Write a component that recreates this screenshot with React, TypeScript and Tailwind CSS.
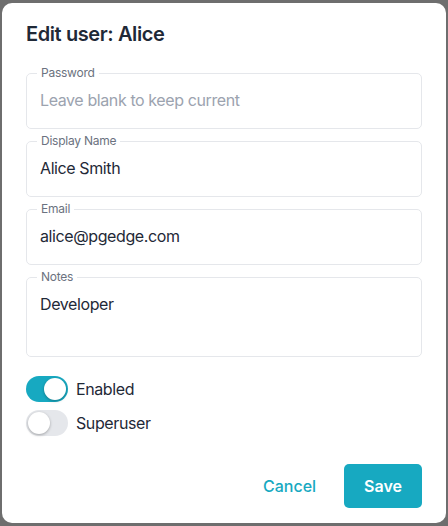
import { ReactNode, useState } from 'react'
import clsx from 'clsx'

function Field({ label, children }: { label: string, children: ReactNode }) {
  return (
    <fieldset className="border border-[#e5e7eb] rounded-[5px] px-[13px] pb-4 min-w-0">
      <legend className="ml-[-3px] px-[4px] text-xs leading-none tracking-[-0.02em] text-[#6b7280]">
        {label}
      </legend>
      <div className="mt-[9px]">
        {children}
      </div>
    </fieldset>
  )
}

function Toggle({ on, label, onChange }: { on: boolean, label: string, onChange: (v: boolean) => void }) {
  return (
    <label className="flex items-center gap-2 cursor-pointer select-none">
      <button
        type="button"
        onClick={() => onChange(!on)}
        className={clsx('w-[42px] h-[26px] rounded-full p-[2px] flex transition-colors', {
          ['bg-[#17a9c1] justify-end']: on,
          ['bg-[#e5e7eb] justify-start']: !on,
        })}
      >
        <span className="block w-[22px] h-[22px] rounded-full bg-white shadow-[0_1px_3px_rgba(0,0,0,0.3)]" />
      </button>
      <span className="text-base leading-6 text-[#1f2937]">{label}</span>
    </label>
  )
}

export default function App() {
  const [enabled, setEnabled] = useState(true)
  const [superuser, setSuperuser] = useState(false)

  return (
    <div
      className="w-[448px] h-[526px] bg-[#6e6e6e] pl-[2px] pt-[3px] tracking-[-0.025em]"
      style={{ fontFamily: 'Inter, "Noto Sans", sans-serif' }}
    >
      <div className="w-[444px] h-[520px] bg-white rounded-[10px] px-6 flex flex-col">
        <h2 className="pt-[17px] text-xl leading-7 font-semibold text-[#1f2937]">
          Edit user: Alice
        </h2>

        <div className="mt-[19px] flex flex-col gap-[6px]">
          <Field label="Password">
            <input
              type="password"
              placeholder="Leave blank to keep current"
              className="block w-full h-6 text-base leading-6 text-[#1f2937] placeholder:text-[#9ca3af] outline-none"
            />
          </Field>
          <Field label="Display Name">
            <input
              type="text"
              defaultValue="Alice Smith"
              className="block w-full h-6 text-base leading-6 text-[#1f2937] outline-none"
            />
          </Field>
          <Field label="Email">
            <input
              type="text"
              defaultValue="alice@pgedge.com"
              className="block w-full h-6 text-base leading-6 text-[#1f2937] outline-none"
            />
          </Field>
          <Field label="Notes">
            <textarea
              rows={2}
              defaultValue="Developer"
              className="block w-full h-12 text-base leading-6 text-[#1f2937] outline-none resize-none"
            />
          </Field>
        </div>

        <div className="mt-[19px] flex flex-col gap-2">
          <Toggle on={enabled} label="Enabled" onChange={setEnabled} />
          <Toggle on={superuser} label="Superuser" onChange={setSuperuser} />
        </div>

        <div className="mt-auto pb-[15px] flex justify-end gap-2 tracking-normal">
          <button className="h-11 px-5 rounded-[5px] text-base font-medium text-[#17a9c1]">
            Cancel
          </button>
          <button className="h-11 px-5 rounded-[5px] bg-[#17a9c1] text-base font-semibold text-white">
            Save
          </button>
        </div>
      </div>
    </div>
  )
}
